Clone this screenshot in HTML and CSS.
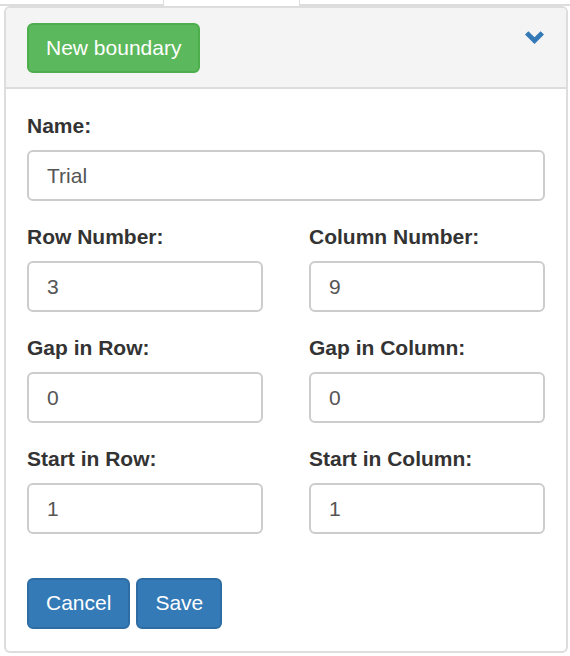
FILE: index.html
```html
<!DOCTYPE html>
<html>
<head>
<meta charset="utf-8">
<link rel="stylesheet" href="styles.css">
</head>
<body>
<div class="tabs">
  <div class="tab-line tab-left"></div>
  <div class="tab-active"></div>
  <div class="tab-line tab-right"></div>
</div>
<div class="panel">
  <div class="panel-heading">
    <button class="btn btn-success">New boundary</button>
    <svg class="chevron" width="19" height="13" viewBox="0 0 19 13"><polygon points="0,3.6 3.4,0.2 9.5,6.3 15.6,0.2 19,3.6 9.5,13" fill="#337ab7"/></svg>
  </div>
  <div class="panel-body">
    <div class="form-group">
      <label class="label">Name:</label>
      <div class="input">Trial</div>
    </div>
    <div class="grid">
      <div class="form-group">
        <label class="label">Row Number:</label>
        <div class="input">3</div>
      </div>
      <div class="form-group">
        <label class="label">Column Number:</label>
        <div class="input">9</div>
      </div>
      <div class="form-group">
        <label class="label">Gap in Row:</label>
        <div class="input">0</div>
      </div>
      <div class="form-group">
        <label class="label">Gap in Column:</label>
        <div class="input">0</div>
      </div>
      <div class="form-group">
        <label class="label">Start in Row:</label>
        <div class="input">1</div>
      </div>
      <div class="form-group">
        <label class="label">Start in Column:</label>
        <div class="input">1</div>
      </div>
    </div>
    <div class="actions">
      <button class="btn btn-primary">Cancel</button>
      <button class="btn btn-primary">Save</button>
    </div>
  </div>
</div>
</body>
</html>
```

FILE: styles.css
```css
* { box-sizing: border-box; }
html, body { margin: 0; padding: 0; background: #fff; }
body {
  font-family: "Liberation Sans", Arial, sans-serif;
  font-size: 21px;
  line-height: 30px;
  color: #333;
  width: 570px;
  height: 656px;
  overflow: hidden;
}
.tabs {
  display: flex;
  height: 6px;
}
.tab-line {
  border-bottom: 2px solid #dddddd;
}
.tab-left { width: 163px; }
.tab-right { flex: 1; }
.tab-active {
  width: 137px;
  background: #fff;
  border-left: 1px solid #dddddd;
  border-right: 1px solid #dddddd;
}
.panel {
  margin-left: 4px;
  width: 564px;
  height: 647px;
  border: 2px solid #dddddd;
  border-radius: 6px;
  background: #fff;
}
.panel-heading {
  display: flex;
  justify-content: space-between;
  align-items: flex-start;
  background: #f4f4f4;
  border-bottom: 2px solid #dddddd;
  border-radius: 4px 4px 0 0;
  padding: 15px 22px 14px 21px;
}
.chevron {
  margin-top: 8px;
  display: block;
}
.btn {
  font-family: "Liberation Sans", Arial, sans-serif;
  font-size: 21px;
  line-height: 30px;
  height: 50px;
  padding: 8px 17px 10px;
  border-radius: 6px;
  color: #fff;
  border: 2px solid;
  cursor: pointer;
}
.btn-success {
  background: #5cb85c;
  border-color: #4cae4c;
}
.btn-primary {
  background: #337ab7;
  border-color: #2e6da4;
  height: 51px;
}
.panel-body {
  padding: 22px 21px 21px 21px;
}
.form-group {
  margin-bottom: 21px;
}
.label {
  display: block;
  font-weight: bold;
  margin-bottom: 9px;
  line-height: 30px;
}
.input {
  height: 51px;
  border: 2px solid #cccccc;
  border-radius: 6px;
  padding: 8px 18px;
  color: #555;
  line-height: 31px;
}
.grid {
  display: grid;
  grid-template-columns: 1fr 1fr;
  column-gap: 46px;
}
.actions {
  margin-top: 23px;
  display: flex;
  gap: 6px;
}
```
